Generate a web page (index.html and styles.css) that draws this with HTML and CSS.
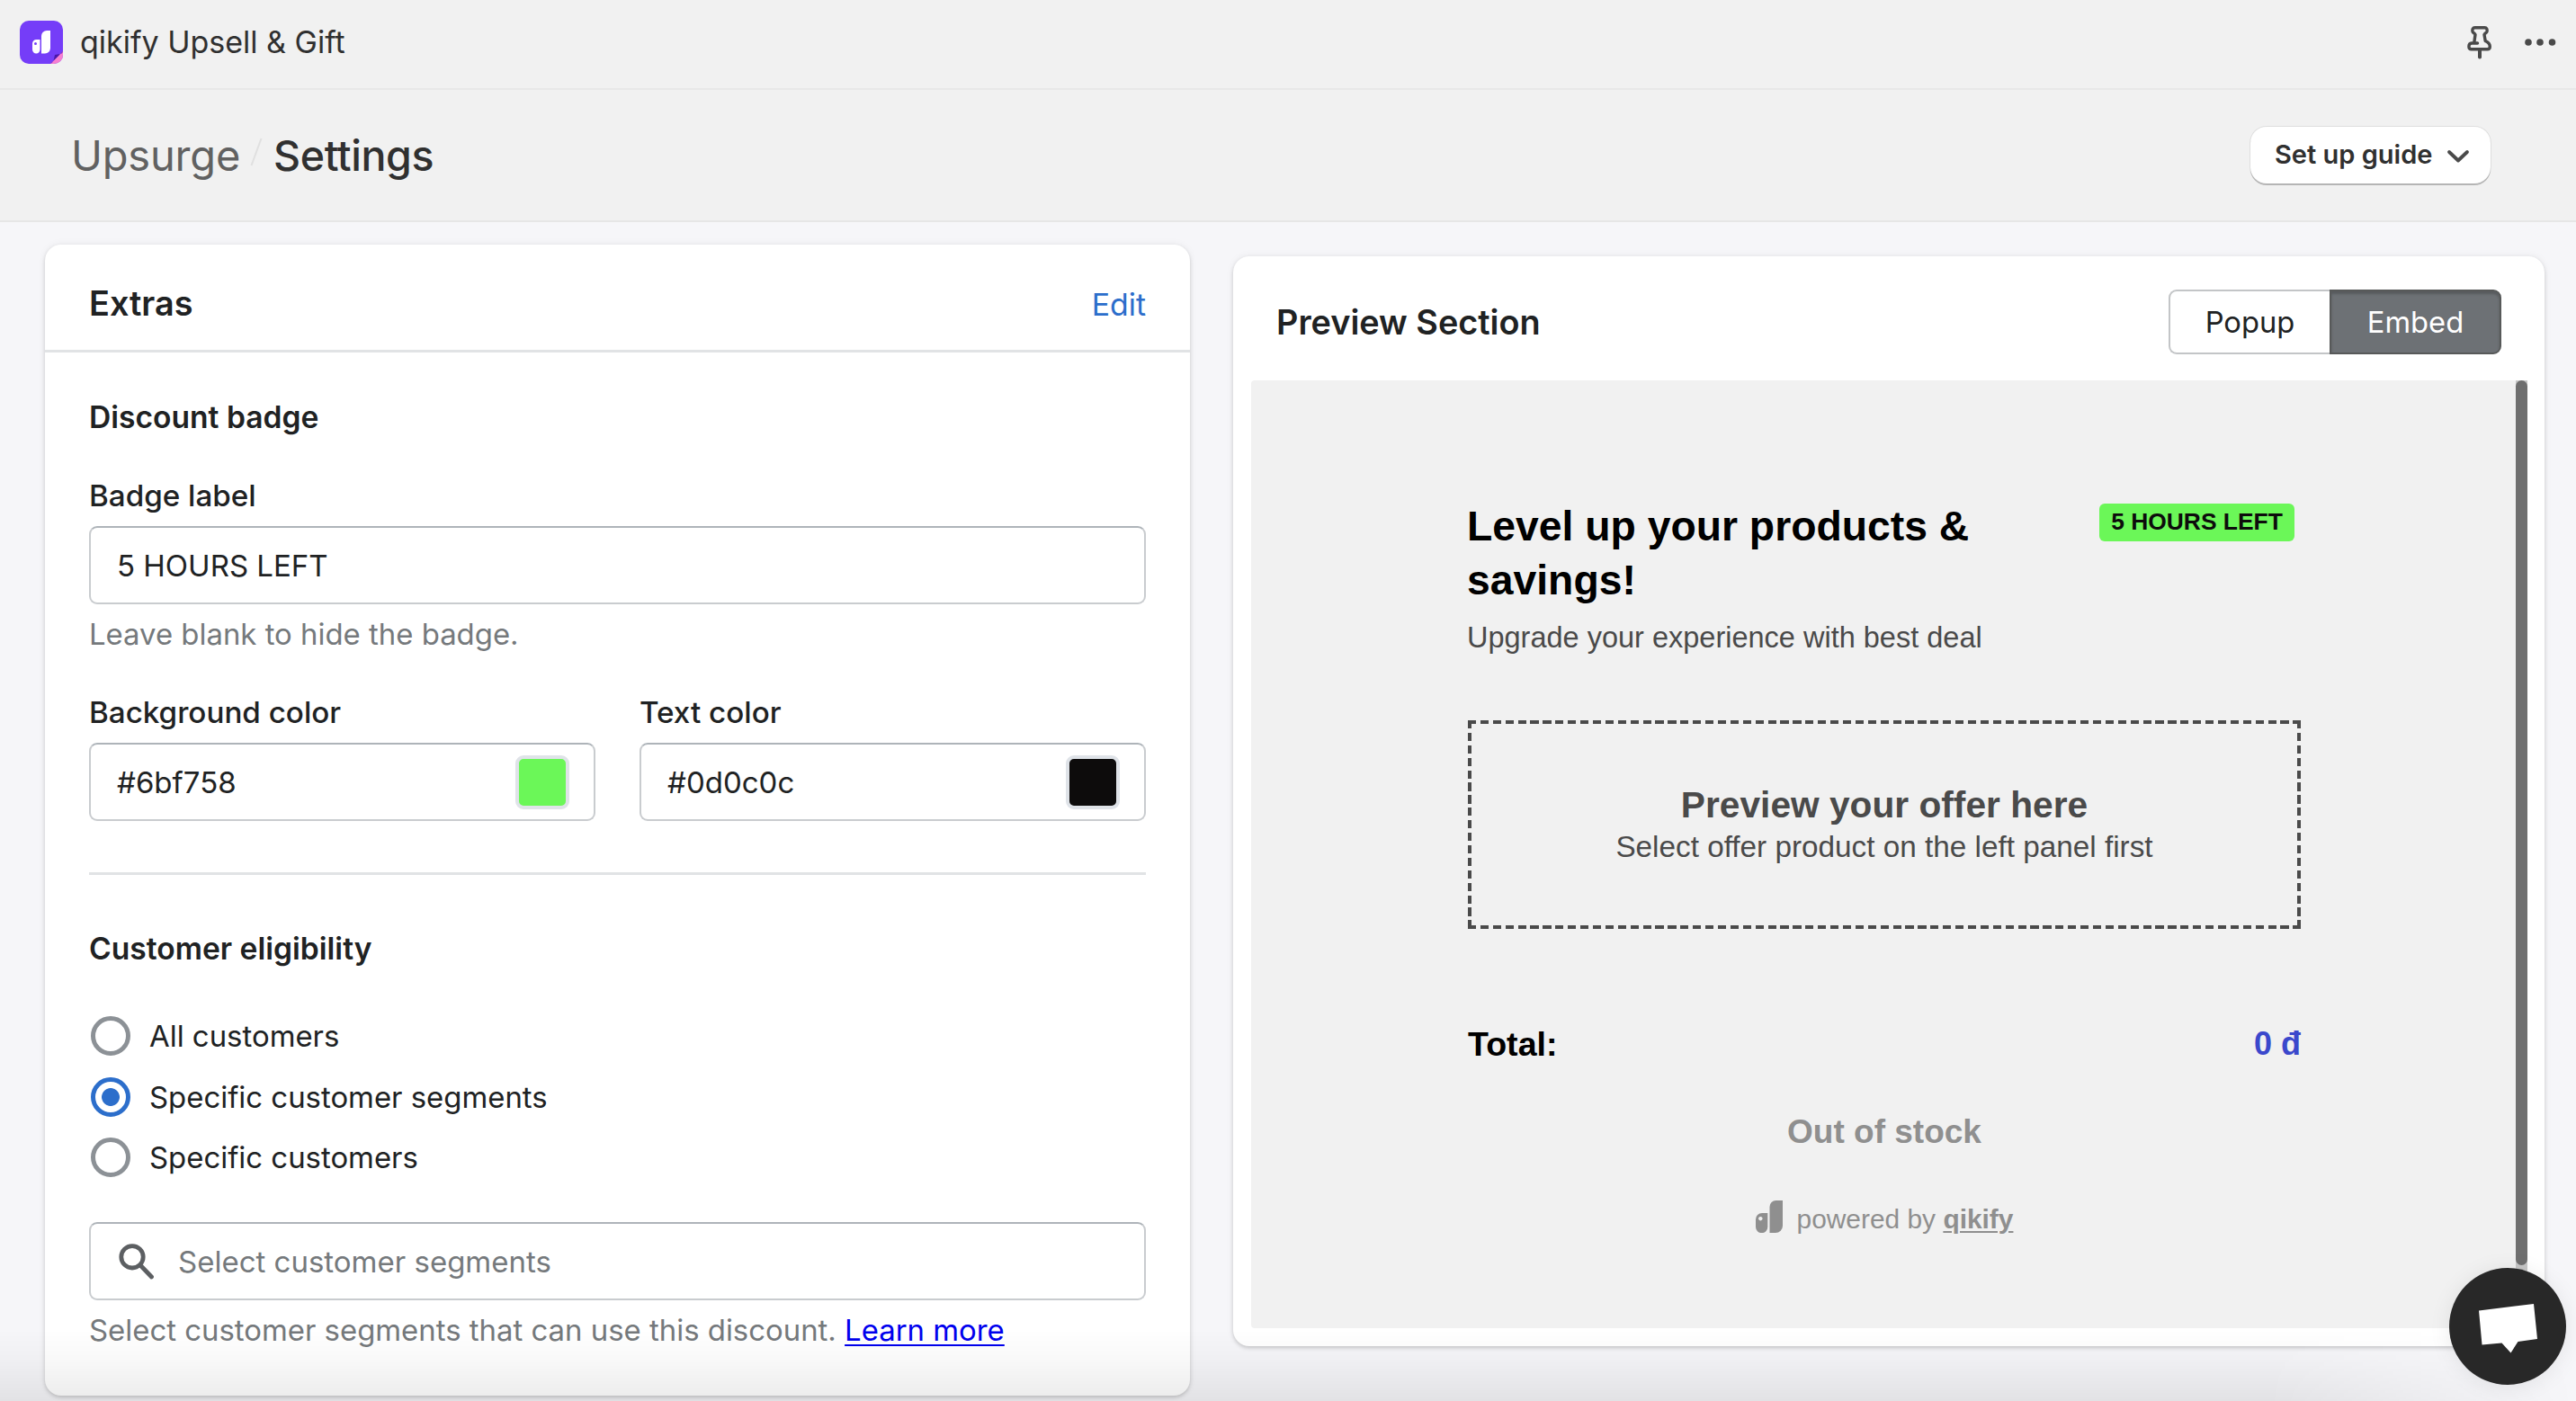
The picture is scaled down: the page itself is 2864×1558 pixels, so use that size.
FILE: index.html
```
<!DOCTYPE html>
<html lang="en">
<head>
<meta charset="UTF-8">
<title>qikify Upsell &amp; Gift</title>
<link rel="stylesheet" href="styles.css">
</head>
<body>

<header class="topbar">
    <svg class="app-logo" viewBox="0 0 48 48">
        <rect width="48" height="48" rx="10" fill="#753df8"/>
        <path d="M48 34V38A10 10 0 0 1 38 48H34Z" fill="#f77fd0"/>
        <path d="M48 34C47 38 43 37 39 38C38 42 38 46 34 48Z" fill="#4b17a8"/>
        <path d="M24 17a6 6 0 0 1 6-6h4v19.500a6 6 0 0 1-6 6h-4z" fill="#fff"/>
        <path d="M14 25.500a4.500 4.500 0 0 1 4.500-4.500h4v11a4.250 4.500 0 0 1-8.500 0z" fill="#fff"/>
        <circle cx="17.500" cy="25.500" r="1.500" fill="#753df8"/>
    </svg>
    <span class="app-name">qikify Upsell &amp; Gift</span>
    <svg class="icon-pin" viewBox="0 0 28 38" fill="none" stroke="#4a4a4a" stroke-width="3.400" stroke-linecap="round" stroke-linejoin="round">
        <path d="M11.500 20H5C3 20.200 1.900 21.500 1.900 23.700C1.900 25.700 2.800 26.800 4.800 26.800H22.500C24.500 26.800 25.300 25.700 25.300 23.700C25.300 20 22.500 18.800 20.200 17.500L19 10.500C19.500 9 21.500 8.800 22 7C22.500 4.800 21.700 2.800 19.500 2.800H8.500C6.300 2.800 5.500 4.800 6 7C6.500 8.800 8.500 9 9 10.500L7.900 18.500"/>
        <path d="M14 28V35.500" stroke-width="4"/>
    </svg>
    <svg class="icon-dots" viewBox="0 0 36 10" fill="#4a4a4a">
        <circle cx="5" cy="5" r="3.800"/><circle cx="18" cy="5" r="3.800"/><circle cx="31.500" cy="5" r="3.800"/>
    </svg>
</header>

<div class="page-header">
    <span class="crumb">Upsurge</span>
    <svg class="slash" viewBox="0 0 14 32"><path d="M12.500 1L1.500 31" stroke="#e0e0e0" stroke-width="2"/></svg>
    <h1 class="page-title">Settings</h1>
    <button class="guide-button">Set up guide
        <svg class="chevron" viewBox="0 0 26 16"><path d="M3 3L13 12.500L23 3" fill="none" stroke="#4a4a4a" stroke-width="3.800" stroke-linecap="round" stroke-linejoin="round"/></svg>
    </button>
</div>

<main class="layout">

    <section class="card settings">
        <div class="settings-header">
            <h2 class="card-title">Extras</h2>
            <a class="edit-link">Edit</a>
        </div>
        <div class="settings-body">
            <h3 class="subheading">Discount badge</h3>

            <label class="label" for="badgeLabel">Badge label</label>
            <div class="field"><input type="text" id="badgeLabel" value="5 HOURS LEFT"></div>
            <p class="help">Leave blank to hide the badge.</p>

            <div class="color-row">
                <div>
                    <label class="label" for="bgColor">Background color</label>
                    <div class="field"><input type="text" id="bgColor" value="#6bf758"><span class="swatch green"></span></div>
                </div>
                <div>
                    <label class="label" for="textColor">Text color</label>
                    <div class="field"><input type="text" id="textColor" value="#0d0c0c"><span class="swatch black"></span></div>
                </div>
            </div>

            <hr class="divider">

            <h3 class="subheading">Customer eligibility</h3>
            <div class="choices">
                <label class="choice"><input type="radio" name="who">All customers</label>
                <label class="choice"><input type="radio" name="who" checked>Specific customer segments</label>
                <label class="choice"><input type="radio" name="who">Specific customers</label>
            </div>

            <div class="field search">
                <svg class="icon-search" viewBox="0 0 40 40" fill="none" stroke="#5c5f62" stroke-width="4.800" stroke-linecap="round">
                    <circle cx="15" cy="14.800" r="12.200"/><path d="M24.500 24.500L36.500 37"/>
                </svg>
                <input type="text" placeholder="Select customer segments">
            </div>
            <p class="help">Select customer segments that can use this discount. <a class="learn" href="#">Learn more</a></p>
        </div>
    </section>

    <section class="card preview">
        <div class="preview-header">
            <h2 class="card-title">Preview Section</h2>
            <div class="toggle">
                <button class="toggle-item">Popup</button>
                <button class="toggle-item active">Embed</button>
            </div>
        </div>
        <div class="preview-frame">
            <div class="offer">
                <div class="offer-head">
                    <div class="offer-text">
                        <div class="offer-title">Level up your products &amp; savings!</div>
                        <div class="offer-sub">Upgrade your experience with best deal</div>
                    </div>
                    <span class="badge">5 HOURS LEFT</span>
                </div>
                <div class="dropzone">
                    <div class="drop-title">Preview your offer here</div>
                    <div class="drop-sub">Select offer product on the left panel first</div>
                </div>
                <div class="total"><span>Total:</span><span class="price">0 đ</span></div>
                <div class="stock">Out of stock</div>
                <div class="powered">
                    <svg class="powered-logo" viewBox="0 0 30 36" fill="#8f8f8f">
                        <path d="M15.500 7a7 7 0 0 1 7-7H30v28a8 8 0 0 1-8 8h-6.500z"/>
                        <path fill-rule="evenodd" d="M0 21a7 7 0 0 1 7-7h6.300v15.500a6.600 6.600 0 0 1-13.300 0zM5.300 18a2.200 2.200 0 1 0 .01 0z"/>
                    </svg>
                    <span>powered by <a class="brand">qikify</a></span>
                </div>
            </div>
            <div class="scrollbar"><div class="thumb"></div></div>
        </div>
    </section>

</main>

<div class="bottom-fade"></div>

<button class="chat">
    <svg viewBox="0 0 130 130"><path d="M33 47.500L94 40L98 79L76.500 82L68.500 94.500L58.500 83.500L36.500 85.500Z" fill="#fff"/></svg>
</button>

</body>
</html>
```
FILE: styles.css
```
* {
box-sizing: border-box;
}

body {
margin: 0;
height: 1558px;
overflow: hidden;
position: relative;
background-color: #f6f6f9;
color: #202223;
font-family: Inter, "Noto Sans", sans-serif;
font-size: 32.9px;
line-height: 44px;
}

h1, h2, h3, p {
margin: 0;
font-weight: 400;
}

button, input {
font-family: inherit;
color: inherit;
}

svg {
display: block;
flex-shrink: 0;
}

/* Top bars */
.topbar {
display: flex;
align-items: center;
height: 100px;
padding: 0 22px 4px;
background-color: #f1f1f1;
border-bottom: 2px solid #e8e8e8;
color: #303030;
}

.app-logo {
width: 48px;
height: 48px;
}

.app-name {
margin-left: 19px;
font-size: 34px;
}

.icon-pin {
width: 28px;
height: 38px;
margin-left: auto;
}

.icon-dots {
width: 36px;
height: 10px;
margin-left: 35px;
}

.page-header {
display: flex;
align-items: center;
height: 147px;
padding: 0 95px 0 79px;
background-color: #f1f1f1;
border-bottom: 2px solid #e6e6e6;
}

.crumb {
font-size: 47px;
line-height: 60px;
letter-spacing: -0.2px;
color: #616161;
}

.slash {
width: 14px;
height: 32px;
margin: 0 12px 8px 11px;
}

.page-title {
font-size: 46.5px;
line-height: 60px;
font-weight: 480;
letter-spacing: -0.4px;
color: #303030;
}

.guide-button {
display: flex;
align-items: center;
justify-content: space-between;
width: 267px;
height: 63px;
margin-left: auto;
padding: 0 23px 2px 27px;
background-color: #fff;
border: none;
border-radius: 18px;
box-shadow: 0 2px 0 #b5b5b5, 0 0 0 1px #dedede;
font-size: 29px;
font-weight: 570;
color: #303030;
}

.chevron {
width: 26px;
height: 16px;
margin-top: 5px;
}

/* Cards */
.layout {
display: flex;
align-items: flex-start;
padding: 25px 35px 0 50px;
gap: 48px;
}

.card {
background-color: #fff;
border-radius: 18px;
box-shadow: 0 0 10px rgba(23, 24, 24, 0.06), 0 2px 4px rgba(0, 0, 0, 0.16);
}

.settings {
width: 1273px;
height: 1280px;
}

.card-title {
font-size: 37.8px;
line-height: 48px;
font-weight: 600;
}

.settings-header {
display: flex;
justify-content: space-between;
align-items: baseline;
height: 120px;
padding: 41px 49px 0;
border-bottom: 3px solid #e1e3e5;
}

.edit-link {
font-size: 33.8px;
color: #2c6ecb;
}

.settings-body {
padding: 50px 49px 0;
}

.subheading {
font-size: 33.6px;
font-weight: 600;
}

.label {
display: block;
margin: 43px 0 12px;
font-size: 33.2px;
font-weight: 500;
}

.field {
display: flex;
align-items: center;
height: 87px;
padding: 0 27px 0 29px;
border: 2px solid #c9cccf;
border-top-color: #aeb4b9;
border-radius: 9px;
background-color: #fff;
}

.field input {
flex: 1;
min-width: 0;
padding: 0;
border: none;
outline: none;
background: none;
font-size: 33px;
line-height: 44px;
}

.field input::placeholder {
color: #75797c;
opacity: 1;
}

.help {
margin-top: 11px;
color: #75797c;
}

.color-row {
display: grid;
grid-template-columns: minmax(0, 1fr) minmax(0, 1fr);
gap: 49px;
}

.swatch {
width: 60px;
height: 60px;
border: 4px solid #dfe3e8;
border-radius: 9px;
}

.green {
background-color: #6bf758;
}

.black {
background-color: #0d0c0c;
}

.divider {
height: 3px;
margin: 57px 0 60px;
border: none;
background-color: #e1e3e5;
}

.choices {
display: flex;
flex-direction: column;
gap: 23.5px;
margin: 53px 0 50px;
}

.choice {
display: flex;
align-items: center;
gap: 21px;
}

.choice input {
appearance: none;
width: 44px;
height: 44px;
margin: 0 0 0 2px;
border: 5px solid #8c9196;
border-radius: 50%;
background-color: #fff;
}

.choice input:checked {
border-color: #2c6ecb;
background-image: radial-gradient(circle, #2c6ecb 9.5px, transparent 10.3px);
}

.search {
gap: 26px;
}

.icon-search {
width: 40px;
height: 40px;
margin-left: 2px;
}

.learn {
color: #0000ee;
text-underline-offset: 4px;
text-decoration-thickness: 2px;
}

/* Preview */
.preview {
width: 1458px;
height: 1212px;
margin-top: 13px;
}

.preview-header {
display: flex;
justify-content: space-between;
align-items: center;
padding: 37px 48px 29px;
}

.toggle {
display: flex;
width: 370px;
height: 72px;
}

.toggle-item {
width: 179px;
padding: 0;
border: 2px solid #c3c5c7;
border-right: none;
border-radius: 9px 0 0 9px;
background-color: #fff;
font-size: 32.7px;
}

.toggle-item.active {
width: 191px;
border: 2px solid #575959;
border-radius: 0 9px 9px 0;
background-color: #6d7175;
box-shadow: inset 0 3px 3px rgba(0, 0, 0, 0.2);
color: #fff;
}

.preview-frame {
display: flex;
height: 1054px;
margin: 0 19px 0 20px;
border-radius: 4px;
background-color: #f1f1f1;
font-family: "Liberation Sans", Arial, sans-serif;
}

.offer {
width: 1167px;
padding: 132px 0 0 241px;
}

.offer-head {
display: flex;
align-items: flex-start;
}

.offer-text {
flex: 1;
margin-left: -1px;
}

.offer-title {
font-size: 46.3px;
line-height: 60px;
font-weight: bold;
color: #000;
}

.offer-sub {
margin-top: 12px;
font-size: 32.5px;
color: #4a4a4a;
}

.badge {
width: 217px;
margin: 5px 7px 0 0;
border-radius: 6px;
background-color: #6bf758;
color: #0d0c0c;
font-size: 26.4px;
line-height: 41px;
padding-bottom: 1px;
font-weight: bold;
text-align: center;
}

/* Dashed frame, drawn one side at a time to keep the dash length even */
.dropzone {
--dash: #4a4a4a 0 9.2px, transparent 9.2px 13.9px;
display: flex;
flex-direction: column;
justify-content: center;
height: 232px;
margin-top: 70px;
background:
repeating-linear-gradient(90deg, var(--dash)) top / 100% 4px no-repeat,
repeating-linear-gradient(90deg, var(--dash)) bottom / 100% 4px no-repeat,
repeating-linear-gradient(180deg, var(--dash)) left / 4px 100% no-repeat,
repeating-linear-gradient(180deg, var(--dash)) right / 4px 100% no-repeat;
color: #4a4a4a;
text-align: center;
}

.drop-title {
font-size: 40.7px;
line-height: 48px;
font-weight: bold;
}

.drop-sub {
padding-top: 1px;
font-size: 33.3px;
}

.total {
display: flex;
justify-content: space-between;
margin-top: 106px;
font-size: 37.6px;
font-weight: bold;
color: #000;
}

.price {
font-size: 36px;
color: #3b48cc;
}

.stock {
margin-top: 54px;
font-size: 37px;
font-weight: bold;
text-align: center;
color: #8f8f8f;
}

.powered {
display: flex;
justify-content: center;
align-items: center;
gap: 16px;
margin-top: 53px;
font-size: 29.9px;
color: #8f8f8f;
}

.powered-logo {
width: 30px;
height: 36px;
margin-bottom: 6px;
}

.brand {
font-weight: bold;
text-decoration: underline;
text-decoration-thickness: 2px;
text-underline-offset: 3px;
}

.scrollbar {
width: 13px;
margin-left: auto;
background-color: #c6c6c6;
}

.thumb {
height: 984px;
border-radius: 7px;
background-color: #6f6f6f;
}

.bottom-fade {
position: absolute;
left: 0;
right: 0;
bottom: 0;
height: 80px;
background: linear-gradient(rgba(0, 0, 0, 0), rgba(0, 0, 0, 0.025) 40%, rgba(0, 0, 0, 0.08));
-webkit-mask-image: linear-gradient(90deg, #000 88%, transparent);
mask-image: linear-gradient(90deg, #000 88%, transparent);
pointer-events: none;
}

.chat {
position: absolute;
right: 11px;
bottom: 18px;
width: 130px;
height: 130px;
padding: 0;
border: none;
border-radius: 50%;
background-color: #282828;
box-shadow: 0 2px 24px rgba(0, 0, 0, 0.08);
}
```
